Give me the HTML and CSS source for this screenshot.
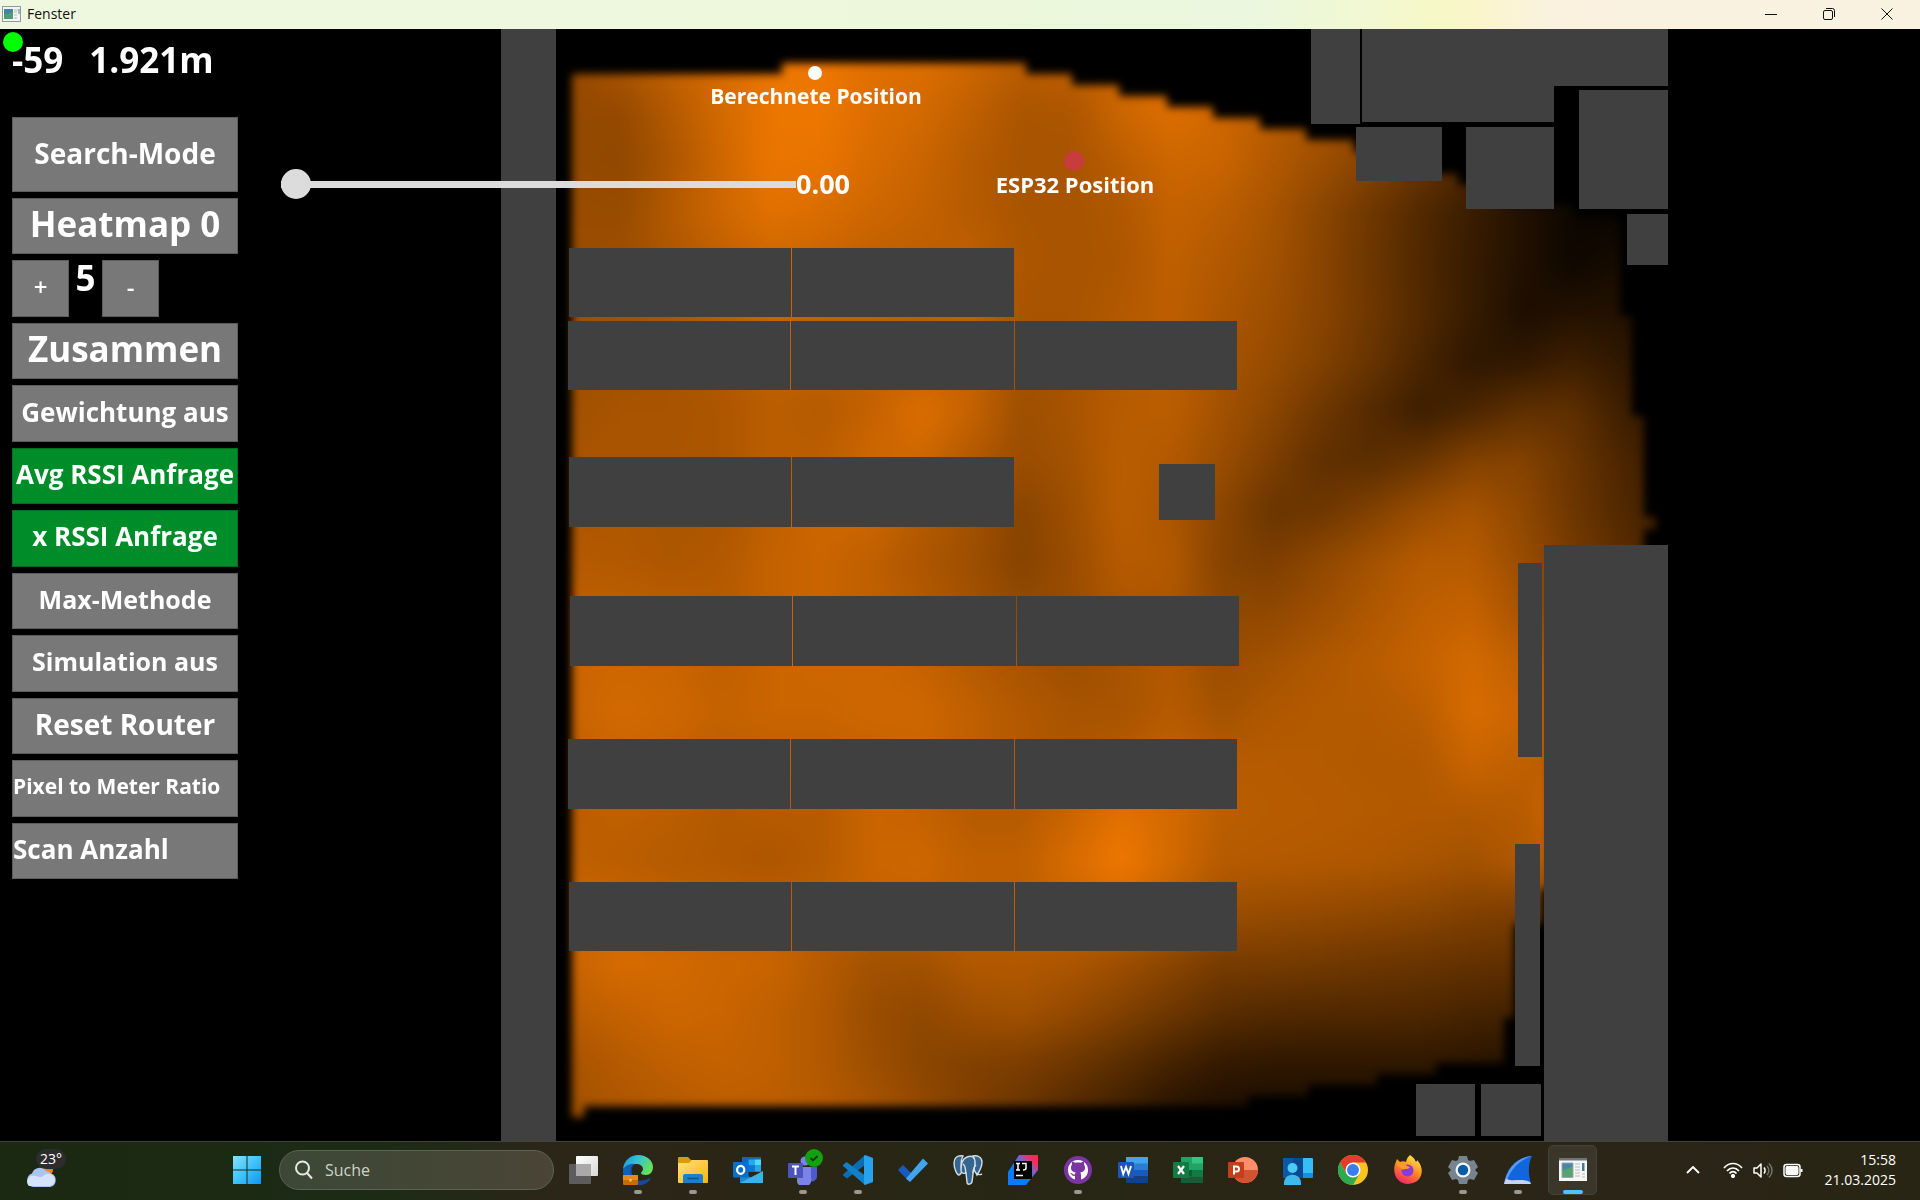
FILE: index.html
```html
<!DOCTYPE html>
<html lang="de">
<head>
<meta charset="utf-8">
<title>Fenster</title>
<link rel="stylesheet" href="styles.css">
</head>
<body>
<header class="titlebar">
  <svg class="title-icon" viewBox="0 0 19 16" aria-hidden="true"><rect x=".5" y=".5" width="18" height="15" fill="#f4f4f4" stroke="#8d9aa5"/><rect x="2" y="3" width="9" height="10" fill="#3f86a0"/><path d="M2 13V9l9-3v7z" fill="#4f9e72"/><path d="M12 4h4M12 6h3M12 9h3M12 12h3" stroke="#bbb"/><path d="M17 3v5" stroke="#3a8a80"/></svg>
  <h1 class="title-text">Fenster</h1>
  <div class="window-controls">
    <button class="window-btn" aria-label="Minimieren"><svg viewBox="0 0 14 14"><path d="M1 7.500h12"/></svg></button>
    <button class="window-btn" aria-label="Wiederherstellen"><svg viewBox="0 0 14 14"><rect x="1.500" y="3.500" width="9" height="9" rx="1.500"/><path d="M4 1.500h6.500a2 2 0 0 1 2 2V10"/></svg></button>
    <button class="window-btn" aria-label="Schließen"><svg viewBox="0 0 14 14"><path d="M1.500 1.500l11 11M12.500 1.500l-11 11"/></svg></button>
  </div>
</header>

<main class="stage">
  <div class="map">
    <canvas class="heat" id="heat" width="1920" height="1112"></canvas>
    <svg class="plan" viewBox="0 0 1920 1112">
      <g class="block">
        <rect x="501" y="-2" width="55" height="1116"/>
        <rect x="569" y="219" width="222" height="69"/><rect x="792" y="219" width="222" height="69"/>
        <rect x="568" y="292" width="222" height="69"/><rect x="791" y="292" width="223" height="69"/><rect x="1015" y="292" width="222" height="69"/>
        <rect x="569" y="428" width="222" height="70"/><rect x="792" y="428" width="222" height="70"/>
        <rect x="1159" y="435" width="56" height="56"/>
        <rect x="570" y="567" width="222" height="70"/><rect x="793" y="567" width="223" height="70"/><rect x="1017" y="567" width="222" height="70"/>
        <rect x="568" y="710" width="222" height="70"/><rect x="791" y="710" width="223" height="70"/><rect x="1015" y="710" width="222" height="70"/>
        <rect x="569" y="853" width="222" height="69"/><rect x="792" y="853" width="222" height="69"/><rect x="1015" y="853" width="222" height="69"/>
        <rect x="1311" y="-2" width="49" height="97"/>
        <path d="M1362-2h306v59h-114v36h-192z"/>
        <rect x="1579" y="61" width="89" height="119"/>
        <rect x="1356" y="98" width="86" height="54"/>
        <rect x="1466" y="98" width="88" height="82"/>
        <rect x="1627" y="185" width="41" height="51"/>
        <rect x="1544" y="516" width="124" height="600"/>
        <rect x="1518" y="534" width="24" height="194"/>
        <rect x="1515" y="815" width="25" height="222"/>
        <rect x="1416" y="1055" width="59" height="52"/>
        <rect x="1481" y="1055" width="60" height="52"/>
      </g>
      <circle cx="815" cy="44" r="7" fill="#fff"/>
      <circle cx="1074" cy="132" r="10" fill="#c83c3c"/>
      <circle cx="13" cy="13" r="10" fill="#00ff00"/>
      <text class="pin pin-calc" x="816" y="75">Berechnete Position</text>
      <text class="pin" x="1075" y="164">ESP32 Position</text>
    </svg>
  </div>

  <aside class="panel">
    <p class="readout"><span>-59</span><span>1.921m</span></p>
    <div class="actions">
      <button class="action s28">Search-Mode</button>
      <button class="action s35">Heatmap 0</button>
      <div class="stepper">
        <button class="action plain" aria-label="Mehr">+</button>
        <output class="count">5</output>
        <button class="action plain" aria-label="Weniger">-</button>
      </div>
      <button class="action s35">Zusammen</button>
      <button class="action s26">Gewichtung aus</button>
      <button class="action on s26">Avg RSSI Anfrage</button>
      <button class="action on s26">x RSSI Anfrage</button>
      <button class="action s25">Max-Methode</button>
      <button class="action s25">Simulation aus</button>
      <button class="action s28">Reset Router</button>
      <button class="action left s21">Pixel to Meter Ratio</button>
      <button class="action left s26">Scan Anzahl</button>
    </div>
  </aside>
  <div class="slider">
    <input class="range" id="range" type="range" min="0" max="1" step="0.01" value="0" aria-label="Wert">
    <output class="range-value" for="range">0.00</output>
  </div>
</main>

<footer class="taskbar">
  <div class="weather">
    <svg viewBox="0 0 34 24" aria-hidden="true"><circle cx="23" cy="6" r="5" fill="#f4801f"/><path d="M8 23a7 7 0 0 1-1-13.500A8 8 0 0 1 21 7a7.500 7.500 0 0 1 5 2.500A7 7 0 0 1 25 23z" fill="#a9c3f2"/><path d="M4 22a6 6 0 0 1 2-10c8-1 8 3 12 0s8-3 11 1a6 6 0 0 1-4 9z" fill="#d5e3fb"/></svg>
    <span class="temp">23°</span>
  </div>
  <nav class="apps">
    <button class="app" aria-label="Start"><svg viewBox="0 0 30 30"><defs><linearGradient id="w" x1="0" y1="0" x2="30" y2="30" gradientUnits="userSpaceOnUse"><stop stop-color="#8be2ff"/><stop offset=".5" stop-color="#3fc3fb"/><stop offset="1" stop-color="#0a93f2"/></linearGradient></defs><path d="M1 1h13.500v13.500H1zM15.500 1H29v13.500H15.500zM1 15.500h13.500V29H1zM15.500 15.500H29V29H15.500z" fill="url(#w)"/></svg></button>
    <label class="search"><svg viewBox="0 0 20 20" aria-hidden="true"><circle cx="8.500" cy="8" r="6.500"/><path d="M13 13l5 5.500"/></svg><input type="text" placeholder="Suche" aria-label="Suche"></label>
    <button class="app" aria-label="Taskansicht"><svg viewBox="0 0 30 30"><defs><linearGradient id="tv" x2="1" y2="1"><stop stop-color="#fff"/><stop offset="1" stop-color="#d8d8d8"/></linearGradient></defs><rect x="1" y="9" width="22" height="20" rx="1" fill="#5c5c5c"/><rect x="8" y="1" width="22" height="20" rx="1" fill="url(#tv)"/><path d="M8 9h15v12H8z" fill="#a9a9a9"/></svg></button>
    <button class="app open" aria-label="Edge"><svg viewBox="0 0 30 30"><defs><linearGradient id="e1" x2="1" y2=".4"><stop stop-color="#1f8fd8"/><stop offset=".5" stop-color="#35c1d8"/><stop offset="1" stop-color="#66e05a"/></linearGradient></defs><path d="M0 14C1 5 8 0 15 0c9 0 15 6 15 12 0 5-3 8-7 8-3 0-5-1-5-2 0-1 2-2 2-4 0-3-3-5-7-5-5 0-10 2-13 5z" fill="url(#e1)"/><path d="M0 15c2-5 8-7 12-6-4 2-5 6-4 10 2 8 12 9 19 4-3 5-8 7-12 7C6 30-1 23 0 15z" fill="#0d62b5"/><path d="M12 9c-4 3-4 8-2 12 3 6 10 6 18 2-2 4-6 7-11 7C7 29 4 14 12 9z" fill="#16499c"/><rect y="20" width="15" height="10" rx="1" fill="#c46d06"/><path d="M0 20h15v5H0z" fill="#e5891a"/><path d="M6.500 24h2v2.500h-2z" fill="#ffd25c"/></svg></button>
    <button class="app open" aria-label="Explorer"><svg viewBox="0 0 30 30"><defs><linearGradient id="f1" x2="1" y2="1"><stop stop-color="#ffe07c"/><stop offset="1" stop-color="#f9b50f"/></linearGradient></defs><path d="M0 3a1 1 0 0 1 1-1h9l3 3h16v8H0z" fill="#dc9a0a"/><path d="M0 8h11l3-3h15a1 1 0 0 1 1 1v21a1 1 0 0 1-1 1H1a1 1 0 0 1-1-1z" fill="url(#f1)"/><path d="M5 28v-7a2 2 0 0 1 2-2h16a2 2 0 0 1 2 2v7z" fill="#1c7fcb"/><path d="M9.500 23.500h11" stroke="#0c4f96" stroke-width="1.500"/></svg></button>
    <button class="app" aria-label="Outlook"><svg viewBox="0 0 30 30"><path d="M9 2h19v15H9z" fill="#1066b8"/><path d="M15.500 4.500H22v6h-6.500z" fill="#28a8ea"/><path d="M22 4.500h6v6h-6z" fill="#50d9ff"/><path d="M15.500 10.500H22v6h-6.500z" fill="#0b78d4"/><path d="M22 10.500h6v6h-6z" fill="#28a8ea"/><path d="M7 17l12 6 11-7v12H7z" fill="#1c86d8"/><path d="M7 28l23-12v12z" fill="#35b5ee"/><rect y="7" width="15.500" height="15.500" rx="1" fill="#0a6fc9"/><ellipse cx="7.700" cy="14.800" rx="3.600" ry="4" fill="none" stroke="#fff" stroke-width="2.200"/></svg></button>
    <button class="app open" aria-label="Teams"><svg viewBox="0 0 30 30"><circle cx="17" cy="6" r="4.500" fill="#7b83eb"/><path d="M20 12h9v10a5 5 0 0 1-7 4z" fill="#5059c9"/><path d="M9 12h14v10a7 7 0 0 1-14 5z" fill="#7b83eb"/><rect y="8" width="15" height="15" rx="1" fill="#4b53bc"/><path d="M4 11.500h7M7.500 11.500V20" stroke="#fff" stroke-width="2"/></svg><svg class="badge" viewBox="0 0 18 18"><circle cx="9" cy="9" r="9" fill="#13a10e"/><path d="M5.500 9l2.500 2.500L12.500 7" fill="none" stroke="#0b3d09" stroke-width="1.800"/></svg></button>
    <button class="app open" aria-label="Visual Studio Code"><svg viewBox="0 0 30 30"><path d="M22 0v10L4 23.500l-4-3v-1z" fill="#0a6db5"/><path d="M0 11v-1l3.500-3L22 20.500V30z" fill="#1180c9"/><path d="M22 0l8 3v24l-8 3-1-1V1z" fill="#27a2ee"/></svg></button>
    <button class="app" aria-label="To Do"><svg viewBox="0 0 30 30"><path d="M0 15l5-5 10 10-4 6.500z" fill="#185abd"/><path d="M8 23.500L25 3.500l5 5L12 27z" fill="#41a5ee"/></svg></button>
    <button class="app" aria-label="PostgreSQL"><svg viewBox="0 0 30 30"><path d="M10 1C4 0 1 3 1 8c0 6 3 12 5 12 1 0 2-2 3-3-1-5-2-11 1-16zM20 1c4-1 9 1 9 6 0 5-3 10-5 13-1-3-3-3-3-7 1-5 1-9-1-12z" fill="#336791" stroke="#d8dde2" stroke-width="1.400"/><path d="M14 2c5-2 8 0 8 6 0 5-2 7-2 11l-1 8c-1 3-5 3-5 0l-1-9c-3 1-5 0-5-3s0-11 6-13z" fill="#336791" stroke="#d8dde2" stroke-width="1.400"/><path d="M13 18c-1-4 0-7-3-9M20 18c0-4 1-6 3-8M23 18c2 2 4 2 6 1" fill="none" stroke="#d8dde2" stroke-width="1.400"/></svg></button>
    <button class="app" aria-label="IntelliJ IDEA"><svg viewBox="0 0 30 30"><defs><linearGradient id="ij" x1="0" y1="1" x2="1" y2="0"><stop offset=".4" stop-color="#087cfa"/><stop offset=".65" stop-color="#7c63c8"/><stop offset=".85" stop-color="#fe2857"/></linearGradient></defs><path d="M0 17L11 0h19v15L18 30H0z" fill="url(#ij)"/><path d="M6 6h18v18H6z"/><path d="M8 8.500h4M10 8.500V15M8 15h4M14 8.500h4V13q0 2-3 2M8 20.500h7" fill="none" stroke="#fff" stroke-width="1.500"/></svg></button>
    <button class="app open" aria-label="GitHub Desktop"><svg viewBox="0 0 30 30"><circle cx="15" cy="15" r="14" fill="#7b34a3"/><path d="M15 5C9 5 5 9.500 5 15c0 5 3 8.500 7 9.500V21c-3 .5-3-1.500-5-3 2-.5 2.500 2 5 1.500 0-1 .3-1.500.8-2C9 17 8 15 8 12.500c0-1.200.5-2.200 1-3-.2-1-.2-2 .2-3 1.300 0 2.300.8 3 1.300 1.700-.4 4-.4 5.600 0 .9-.6 2-1.300 3-1.300.5 1 .4 2.200.2 3 .7.900 1 1.800 1 3 0 2.500-1 4.500-4.800 5 .6.700.8 1.500.8 3v4c4-1 7-4.500 7-9.500C25 9.500 21 5 15 5z" fill="#fff"/></svg></button>
    <button class="app" aria-label="Word"><svg viewBox="0 0 30 30"><path d="M8 2h22v7H8z" fill="#41a5ee"/><path d="M8 8.500h22V15H8z" fill="#2b7cd3"/><path d="M8 15h22v6.500H8z" fill="#185abd"/><path d="M8 21.500h22V28H8z" fill="#103f91"/><rect y="7" width="16" height="16" rx="1" fill="#1b56b8"/><path d="M3 11l2.200 8L8 12l2.500 7L13 11" fill="none" stroke="#fff" stroke-width="1.900"/></svg></button>
    <button class="app" aria-label="Excel"><svg viewBox="0 0 30 30"><path d="M8 2h22v26H8z" fill="#21a366"/><path d="M19 2h11v6.500H19z" fill="#33c481"/><path d="M8 15h11v6.500H8z" fill="#0f5c33"/><path d="M19 15h11v6.500H19z" fill="#107c41"/><path d="M8 21.500h22V28H8z" fill="#185c37"/><rect y="7" width="16" height="16" rx="1" fill="#107c41"/><path d="M5 11l6 8M11 11l-6 8" stroke="#fff" stroke-width="2.200"/></svg></button>
    <button class="app" aria-label="PowerPoint"><svg viewBox="0 0 30 30"><circle cx="17" cy="15" r="13" fill="#ff8f6b"/><path d="M4 15h26a13 13 0 0 1-26 0z" fill="#d35230"/><rect y="7" width="16" height="16" rx="1" fill="#c43e1c"/><path d="M6 19.500V11.500h2.500a2.500 2.500 0 0 1 0 5H6" fill="none" stroke="#fff" stroke-width="2"/></svg></button>
    <button class="app" aria-label="Remotehilfe"><svg viewBox="0 0 30 30"><path d="M0 3h20v20H0z" fill="#0b58a5"/><path d="M20 3h9a1 1 0 0 1 1 1v14H20z" fill="#35bdf5"/><path d="M20 18h10v4a1 1 0 0 1-1 1h-9z" fill="#1490df"/><path d="M10 3h10v20H10z" fill="#0a4a92"/><circle cx="9.500" cy="13" r="5" fill="#4ccbf5"/><path d="M1 30v-2c0-11 17-11 17 0v2z" fill="#3db9ec"/></svg></button>
    <button class="app" aria-label="Chrome"><svg viewBox="0 0 30 30"><circle cx="15" cy="15" r="15" fill="#fcc31e"/><path d="M2 7.500A15 15 0 0 1 28 7.500H15L8.500 18.700z" fill="#e33b2e"/><path d="M2 7.500A15 15 0 0 0 15 30l6.500-11.200H8.500z" fill="#2da94f"/><circle cx="15" cy="15" r="7.500" fill="#fff"/><circle cx="15" cy="15" r="6" fill="#3b7ded"/></svg></button>
    <button class="app" aria-label="Firefox"><svg viewBox="0 0 30 30"><defs><linearGradient id="ff" x1=".8" y1="0" x2=".3" y2="1"><stop stop-color="#fff04a"/><stop offset=".5" stop-color="#ff8a1e"/><stop offset="1" stop-color="#f6226e"/></linearGradient></defs><path d="M17 0c6 4 5 6 6 7 1-1 1-2 1-2 9 9 5 24-9 24C5 29-1 20 2 9l2-5 3 3c2-1 4-1 6 0 1-4 2-5 4-7z" fill="url(#ff)"/><circle cx="14.500" cy="15.500" r="6" fill="#8a3ad8"/><path d="M3 8c4-2 8 0 11 3l3 1c-2 3-5 1-7 3-2-2-5-3-7-7z" fill="#ff9a22"/></svg></button>
    <button class="app open" aria-label="Einstellungen"><svg viewBox="0 0 30 30"><path d="M11 1h8l1 4 2 1 4-1 4 7-3 3 3 3-4 7-4-1-2 1-1 4h-8l-1-4-2-1-4 1-4-7 3-3-3-3 4-7 4 1 2-1z" fill="#77838f"/><circle cx="15" cy="15" r="7.500" fill="#f2f4f6"/><circle cx="15" cy="15" r="5.200" fill="#0a5ba8"/></svg></button>
    <button class="app open" aria-label="Wireshark"><svg viewBox="0 0 30 30"><path d="M1 29C3 13 14 2 29 1c-4 8-4 17-1 28z" fill="#1266dd"/><path d="M1 29c3-16 14-27 28-28C16 5 7 15 4 26z" fill="#5c9cf0"/><path d="M1 29l2-5c8 3 15-1 24 3l1 2z" fill="#c3d5f2"/></svg></button>
    <button class="app open current" aria-label="Fenster"><svg viewBox="0 0 30 30"><path d="M1 3h28v23H1z" fill="#f7f7f7"/><path d="M1 3h28v2.500H1z" fill="#6b7480"/><path d="M4 8h11v15H4z" fill="#4a86a5"/><path d="M4 22V16l11-5v11z" fill="#58a26f"/><path d="M4 8h11v14.500H4z" fill="none" stroke="#99a6ad"/><path d="M17 9h5M17 12h5M17 15h5M17 18h5M17 21h5M24 19h3M24 22h3" stroke="#bbb"/><path d="M24 8h2.500v8H24z" fill="#3f7f95"/></svg></button>
  </nav>
  <div class="tray">
    <svg class="ico" viewBox="0 0 20 20"><path d="M4 13l6-6 6 6" stroke-width="1.800"/></svg>
    <svg class="ico" viewBox="0 0 20 20"><path d="M1 8c5-6 13-6 18 0M4 11c3.500-4 8.500-4 12 0M6.500 13.500c2-2.500 5-2.500 7 0" stroke-width="1.700"/><circle cx="10" cy="16" r="1.700" fill="#fff"/></svg>
    <svg class="ico" viewBox="0 0 20 20"><path d="M1 8h3l4-4v13l-4-4H1zM11 7.500c1.500 2 1.500 4 0 6" stroke-width="1.500"/><path d="M14 6c2.500 3 2.500 6 0 9M16 3.500c4 4.500 4 9.500 0 14" stroke="#77756b" stroke-width="1.400"/></svg>
    <svg class="ico" viewBox="0 0 20 20"><rect x="1" y="4.500" width="16" height="12" rx="2.500" stroke-width="1.500"/><rect x="3" y="6.500" width="12" height="8" rx="1" fill="#fff"/><path d="M18.500 9v3" stroke-width="2"/></svg>
    <time class="clock" datetime="2025-03-21T15:58">15:58<br>21.03.2025</time>
  </div>
</footer>
<script src="heat.js"></script>
</body>
</html>
```
FILE: styles.css
```css
* { box-sizing: border-box; }
body {
  margin: 0;
  min-height: 100vh;
  display: flex;
  flex-direction: column;
  background: #000;
  color: #fff;
  font-family: "Open Sans", "Noto Sans", sans-serif;
}
button, input { font: inherit; color: inherit; margin: 0; }
button { border: 0; background: none; padding: 0; }

.titlebar {
  display: flex;
  align-items: center;
  height: 29px;
  padding: 0 4px 2px 2px;
  background: linear-gradient(90deg, #eff8df 0%, #ecf8dc 55%, #ebf8df 65%, #f1f8d2 71%, #f6f8c6 75%, #fbf5cc 77%, #faf2df 81%, #f9f2e0 100%);
  color: #111;
}
.title-icon { width: 19px; height: 16px; }
.title-text { margin: 0 0 0 6px; font-size: 14px; line-height: 20px; font-weight: 400; }
.window-controls { display: flex; margin-left: auto; }
.window-btn { width: 58px; height: 27px; }
.window-btn svg { width: 14px; height: 14px; display: block; margin: 0 auto; fill: none; stroke: #111; }

.stage {
  position: relative;
  flex: 1;
  display: flex;
  align-items: flex-start;
  overflow: hidden;
}
.map { position: absolute; inset: 0; }
.heat, .plan { position: absolute; top: 0; left: 0; width: 100%; height: auto; display: block; }
.block { fill: #404040; }
.pin { font-size: 22px; font-weight: 700; text-anchor: middle; fill: #fff; }
.pin-calc { font-size: 21px; }

.panel { position: relative; width: 238px; padding-left: 12px; }
.readout { display: flex; gap: 26px; margin: 0; padding-top: 6px; height: 88px; font-size: 35px; line-height: 50px; font-weight: 700; }
.actions { display: grid; grid-template-columns: minmax(0, 1fr); grid-template-rows: 75px repeat(11, 1fr); gap: 6px; height: 762px; }
.action {
  display: block;
  width: 100%;
  height: 100%;
  padding-bottom: 4px;
  border: 1px solid #5c5c5c;
  background: #787878;
  color: #fff;
  font-weight: 700;
  line-height: 40px;
  white-space: nowrap;
  text-align: center;
}
.on { background: #008c28; border-color: #006e20; }
.left { text-align: left; }
.s35 { font-size: 35px; }
.s28 { font-size: 28px; }
.s26 { font-size: 26px; }
.s25 { font-size: 25px; }
.s21 { font-size: 21px; }
.stepper { display: grid; grid-template-columns: 57px 33px 57px; }
.plain { font-size: 24px; font-weight: 600; }
.count { font-size: 35px; font-weight: 700; line-height: 36px; text-align: center; }

.slider { position: relative; display: flex; align-items: center; margin: 135px 0 0 43px; }
.range { appearance: none; width: 515px; height: 40px; background: none; }
.range::-webkit-slider-runnable-track { height: 7px; background: #dcdcdc; }
.range::-webkit-slider-thumb { appearance: none; width: 30px; height: 30px; margin-top: -12px; border-radius: 50%; background: #dcdcdc; }
.range-value { font-size: 27px; line-height: 40px; font-weight: 700; }

.taskbar {
  display: grid;
  grid-template-columns: 219px 1fr auto;
  align-items: center;
  height: 59px;
  padding-bottom: 2px;
  border-top: 1px solid #41443a;
  background: linear-gradient(90deg, #1b2913 0%, #1c2b15 20%, #2c2618 29%, #272614 52%, #2b2518 80%, #282514 100%);
}
.weather { position: relative; height: 56px; padding: 22px 0 0 25px; }
.weather svg { width: 34px; height: 24px; display: block; }
.temp { position: absolute; top: 7px; left: 36px; width: 30px; height: 20px; border-radius: 10px; background: #2d2d2d; font-size: 14px; line-height: 20px; text-align: center; }
.apps { display: flex; align-items: center; }
.app { position: relative; width: 55px; height: 56px; display: flex; align-items: center; justify-content: center; }
.app svg { width: 30px; height: 30px; }
.app .badge { position: absolute; top: 7px; right: 7px; width: 18px; height: 18px; }
.open::after { content: ""; position: absolute; bottom: 4px; width: 8px; height: 4px; border-radius: 2px; background: #9a9890; }
.current::before { content: ""; position: absolute; inset: 3px; border: 1px solid #444236; border-radius: 5px; background: #ffffff14; }
.current svg { position: relative; }
.current::after { width: 20px; background: #4cc2ff; }
.search { display: flex; align-items: center; width: 275px; height: 40px; margin: 0 1px 0 5px; padding-left: 14px; gap: 11px; border: 1px solid #5c6354; border-radius: 20px; background: linear-gradient(90deg, #3c4836, #4a4536); }
.search svg { width: 20px; height: 20px; flex: none; fill: none; stroke: #e8e8e8; stroke-width: 2; }
.search input { min-width: 0; flex: 1; padding: 0 12px 0 0; border: 0; outline: 0; background: none; font-size: 16px; line-height: 24px; }
.search input::placeholder { color: #cfd2ca; opacity: 1; }
.tray { display: flex; align-items: center; gap: 10px; padding-right: 24px; }
.ico { width: 20px; height: 20px; fill: none; stroke: #fff; stroke-linejoin: round; }
.ico:first-child { margin-right: 10px; }
.clock { margin-left: 12px; font-size: 14px; line-height: 20px; text-align: right; }
```
FILE: heat.js
```js
// Signal strength samples in percent, one every 50px, starting at (570, 31) on the map.
const samples = [
  [62,72,82,90,98,99,93,92,86,78,80,85,88,86,82,72,62,50,38,20,8,4,3],
  [62,62,75,88,98,99,92,88,80,71,72,85,92,86,78,70,60,48,36,20,8,4,3],
  [62,60,72,86,98,97,90,84,76,70,70,78,86,84,74,66,56,44,32,20,10,5,3],
  [64,63,75,86,94,91,86,82,76,71,70,73,82,78,70,58,46,34,24,14,6,3,3],
  [64,66,72,80,86,84,80,78,80,72,70,72,80,74,68,57,45,33,23,14,6,10,6],
  [66,68,72,78,84,82,80,78,80,70,70,74,79,72,66,57,46,34,23,12,14,14,10],
  [66,68,70,74,80,80,80,82,82,68,70,76,78,70,63,54,43,31,19,20,26,20,12],
  [68,70,70,72,78,76,82,92,82,66,70,77,78,68,58,46,35,25,32,40,40,26,17],
  [70,71,71,72,78,78,86,86,74,64,68,78,74,64,52,40,38,44,55,56,44,32,20],
  [72,73,72,72,80,86,86,76,68,57,66,78,72,58,44,46,54,64,70,60,46,34,24],
  [75,74,72,74,82,84,80,72,66,56,64,76,74,56,52,60,68,76,76,64,50,38,26],
  [80,80,78,76,82,84,80,75,68,62,64,72,72,60,60,66,73,79,82,70,54,42,32],
  [84,86,84,80,84,86,86,82,76,70,66,70,74,64,68,73,77,82,88,80,70,60,50],
  [84,88,86,82,84,84,86,86,80,74,70,70,76,68,73,75,75,78,90,85,75,70,60],
  [80,84,82,78,80,80,82,84,80,74,72,76,82,76,76,75,74,74,84,80,76,70,60],
  [78,80,78,74,76,76,84,82,76,76,84,94,88,78,77,76,75,74,74,76,90,80,70],
  [80,78,76,74,72,76,84,86,80,80,90,100,88,76,75,74,73,71,68,74,80,80,70],
  [84,84,82,80,80,80,82,82,80,78,84,86,78,66,63,62,60,58,54,52,60,50,40],
  [84,90,88,85,84,76,68,68,74,74,72,66,58,50,50,48,46,44,42,40,36,30,20],
  [78,82,86,84,80,74,64,60,66,68,62,54,46,38,35,34,34,33,30,28,24,20,10],
  [70,76,80,82,80,74,66,58,54,52,46,38,29,22,20,20,20,20,18,16,14,10,5],
  [68,72,75,78,78,76,70,62,52,44,34,26,16,12,11,11,10,10,9,8,6,5,3]
];

// Outline of the measured area.
const outline = [
  [572,45],[782,45],[782,34],[1026,34],[1026,45],[1072,45],[1072,56],[1119,56],[1119,67],[1167,67],
  [1167,78],[1213,78],[1213,89],[1260,89],[1260,100],[1306,100],[1306,111],[1354,111],[1354,123],
  [1400,123],[1400,145],[1458,145],[1458,156],[1500,156],[1500,176],[1574,176],[1574,187],[1620,187],
  [1620,287],[1632,287],[1632,387],[1644,387],[1644,488],[1656,488],[1656,500],[1644,500],[1644,560],
  [1550,560],[1550,860],[1541,860],[1541,895],[1514,895],[1514,989],[1504,989],[1504,1034],[1436,1034],
  [1436,1045],[1377,1045],[1377,1056],[1308,1056],[1308,1067],[1248,1067],[1248,1077],[584,1077],
  [584,1088],[572,1088]
];

const canvas = document.getElementById("heat");
const ctx = canvas.getContext("2d");
const rows = samples.length;
const cols = samples[0].length;

const small = document.createElement("canvas");
small.width = cols;
small.height = rows;
const sctx = small.getContext("2d");
samples.forEach((row, y) => row.forEach((v, x) => {
  sctx.fillStyle = `rgb(${Math.round(v * 2.4)}, ${Math.round(v * 1.2)}, 0)`;
  sctx.fillRect(x, y, 1, 1);
}));

ctx.imageSmoothingEnabled = true;
ctx.imageSmoothingQuality = "low";
ctx.filter = "blur(8px)";
ctx.drawImage(small, 545, 6, cols * 50, rows * 50);

ctx.globalCompositeOperation = "destination-in";
ctx.filter = "blur(4px)";
ctx.beginPath();
outline.forEach(([x, y]) => ctx.lineTo(x, y));
ctx.closePath();
ctx.fill();
```
